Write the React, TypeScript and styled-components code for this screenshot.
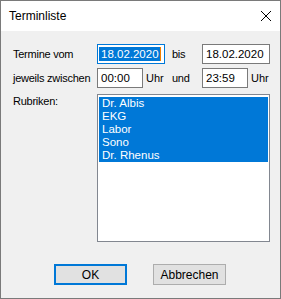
import React from 'react'
import styled, { createGlobalStyle } from 'styled-components'

const Global = createGlobalStyle`
  html, body { margin: 0; padding: 0; background: #fff; }
  * { box-sizing: border-box; }
`

const Window = styled.div`
  width: 281px;
  height: 299px;
  border: 1px solid #7a7a7a;
  background: #f0f0f0;
  display: flex;
  flex-direction: column;
  font-family: "Liberation Sans", Arial, sans-serif;
  font-size: 11px;
  color: #000;
`

const TitleBar = styled.div`
  height: 30px;
  background: #fff;
  display: flex;
  align-items: center;
  justify-content: space-between;
  padding: 0 8px 0 8px;
  font-size: 12px;
`

const Body = styled.div`
  flex: 1;
  padding: 13px 9px 0 12px;
  display: flex;
  flex-direction: column;
`

const Grid = styled.div`
  display: grid;
  grid-template-columns: 84px 75px 30px 1fr;
  grid-auto-rows: 20px;
  row-gap: 4px;
  align-items: center;
`

const Label = styled.div<{ $top?: boolean }>`
  white-space: nowrap;
  letter-spacing: -0.25px;
  align-self: ${p => (p.$top ? 'start' : 'center')};
  padding-top: ${p => (p.$top ? '1px' : '0')};
`

const Cell = styled.div`
  display: flex;
  align-items: center;
  height: 20px;
`

const Field = styled.div<{ $w: number; $focus?: boolean }>`
  width: ${p => p.$w}px;
  height: 20px;
  border: 1px solid ${p => (p.$focus ? '#0078d7' : '#7a7a7a')};
  background: #fff;
  display: flex;
  align-items: center;
  padding-left: ${p => (p.$focus ? '1px' : '3px')};
  font-size: 11.5px;
`

const Selected = styled.span`
  background: #0078d7;
  color: #fff;
  line-height: 14px;
  padding: 0 1px 0 2px;
`

const Caret = styled.span`
  display: inline-block;
  width: 1px;
  height: 14px;
  background: #f08000;
`

const Unit = styled.span`
  margin-left: 3px;
`

const ListRow = styled.div`
  display: grid;
  grid-template-columns: 84px 173px;
  margin-top: 6px;
`

const ListBox = styled.div`
  height: 148px;
  border: 1px solid #828790;
  background: #fff;
  padding: 2px 1px;
`

const Item = styled.div`
  height: 13px;
  line-height: 13px;
  background: #0078d7;
  color: #fff;
  padding-left: 3px;
  font-size: 11.5px;
`

const Buttons = styled.div`
  display: flex;
  justify-content: center;
  gap: 26px;
  margin-top: 22px;
  padding-right: 1px;
  margin-left: -3px;
`

const Button = styled.div<{ $default?: boolean }>`
  width: 73px;
  height: 21px;
  display: flex;
  align-items: center;
  justify-content: center;
  background: #e1e1e1;
  border: ${p => (p.$default ? '2px solid #0078d7' : '1px solid #adadad')};
  font-size: 12px;
`

const CloseIcon = () => (
  <svg width="12" height="12" viewBox="0 0 12 12">
    <path d="M1 1 L11 11 M11 1 L1 11" stroke="#000" strokeWidth="1" fill="none" />
  </svg>
)

const rubriken = ['Dr. Albis', 'EKG', 'Labor', 'Sono', 'Dr. Rhenus']

export default function App() {
  return (
    <>
      <Global />
      <Window>
        <TitleBar>
          <span>Terminliste</span>
          <CloseIcon />
        </TitleBar>
        <Body>
          <Grid>
            <Label>Termine vom</Label>
            <Cell>
              <Field $w={68} $focus>
                <Selected>18.02.2020</Selected>
                <Caret />
              </Field>
            </Cell>
            <Label>bis</Label>
            <Cell>
              <Field $w={68}>18.02.2020</Field>
            </Cell>

            <Label>jeweils zwischen</Label>
            <Cell>
              <Field $w={46}>00:00</Field>
              <Unit>Uhr</Unit>
            </Cell>
            <Label>und</Label>
            <Cell>
              <Field $w={46}>23:59</Field>
              <Unit>Uhr</Unit>
            </Cell>
          </Grid>

          <ListRow>
            <Label $top>Rubriken:</Label>
            <ListBox>
              {rubriken.map(r => (
                <Item key={r}>{r}</Item>
              ))}
            </ListBox>
          </ListRow>

          <Buttons>
            <Button $default>OK</Button>
            <Button>Abbrechen</Button>
          </Buttons>
        </Body>
      </Window>
    </>
  )
}
